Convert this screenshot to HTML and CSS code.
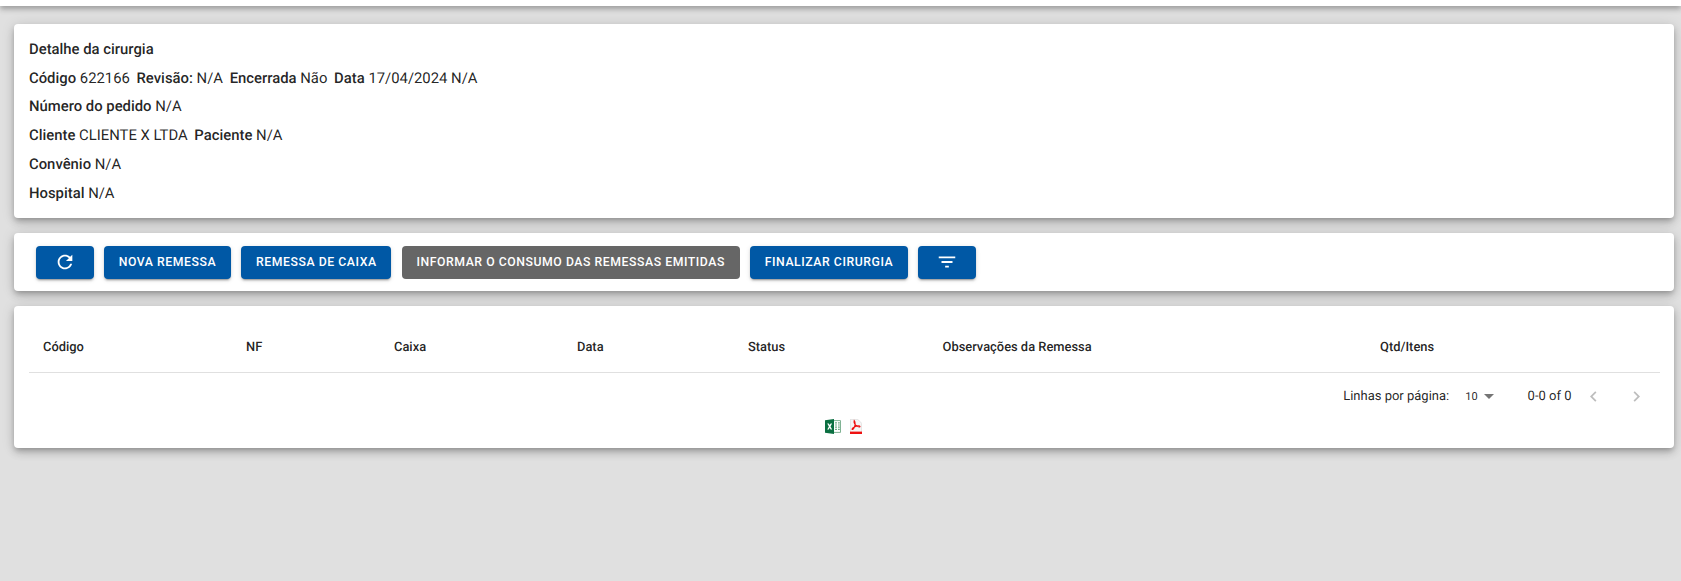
FILE: index.html
```html
<!DOCTYPE html>
<html lang="pt-BR">
<head>
<meta charset="utf-8">
<title>Detalhe da cirurgia</title>
<link rel="stylesheet" href="styles.css">
</head>
<body>
<header class="topbar"></header>
<main class="content">
  <section class="card details">
    <p class="line"><b>Detalhe da cirurgia</b></p>
    <p class="line"><b>Código</b> 622166 <b class="next">Revisão:</b> N/A <b class="next">Encerrada</b> Não <b class="next">Data</b> 17/04/2024 N/A</p>
    <p class="line"><b>Número do pedido</b> N/A</p>
    <p class="line"><b>Cliente</b> CLIENTE X LTDA <b class="next">Paciente</b> N/A</p>
    <p class="line"><b>Convênio</b> N/A</p>
    <p class="line"><b>Hospital</b> N/A</p>
  </section>
  <section class="card toolbar">
    <button class="btn btn-icon" type="button" aria-label="Atualizar">
      <svg class="icon" viewBox="0 0 24 24"><path fill="#fff" d="M17.65 6.35C16.2 4.9 14.21 4 12 4c-4.42 0-7.99 3.58-7.99 8s3.57 8 7.99 8c3.73 0 6.84-2.55 7.73-6h-2.08c-.82 2.33-3.04 4-5.65 4-3.31 0-6-2.69-6-6s2.69-6 6-6c1.66 0 3.14.69 4.22 1.78L13 11h7V4l-2.35 2.35z"/></svg>
    </button>
    <button class="btn" type="button">Nova Remessa</button>
    <button class="btn" type="button">Remessa de Caixa</button>
    <button class="btn btn-grey" type="button">Informar o consumo das remessas emitidas</button>
    <button class="btn" type="button">Finalizar Cirurgia</button>
    <button class="btn btn-icon" type="button" aria-label="Filtrar">
      <svg class="icon" viewBox="0 0 24 24"><path fill="#fff" d="M10 18h4v-2h-4v2zM3 6v2h18V6H3zm3 7h12v-2H6v2z"/></svg>
    </button>
  </section>
  <section class="card listing">
    <table class="table">
      <thead>
        <tr>
          <th class="c1">Código</th>
          <th class="c2">NF</th>
          <th class="c3">Caixa</th>
          <th class="c4">Data</th>
          <th class="c5">Status</th>
          <th class="c6">Observações da Remessa</th>
          <th class="c7">Qtd/Itens</th>
        </tr>
      </thead>
    </table>
    <div class="pager">
      <span class="pager-label">Linhas por página:</span>
      <span class="pager-select">10<svg class="caret" viewBox="0 0 10 5"><path fill="#757575" d="M0 0h10L5 5z"/></svg></span>
      <span class="pager-range">0-0 of 0</span>
      <svg class="chev" viewBox="0 0 24 24"><path fill="#bdbdbd" d="M15.41 7.41 14 6l-6 6 6 6 1.41-1.41L10.83 12z"/></svg>
      <svg class="chev chev-next" viewBox="0 0 24 24"><path fill="#bdbdbd" d="M10 6 8.59 7.41 13.17 12l-4.58 4.59L10 18l6-6z"/></svg>
    </div>
    <div class="exports">
      <svg class="file-xls" viewBox="0 0 16 15">
        <path fill="#fff" stroke="#5f9f78" stroke-width=".8" d="M8 1.6h7.5v11.8H8z"/>
        <path fill="#6fa985" d="M10 3.2h2v1.2h-2zM13 3.2h1.8v1.2H13zM10 5.4h2v1.2h-2zM13 5.4h1.8v1.2H13zM10 7.6h2v1.2h-2zM13 7.6h1.8v1.2H13zM10 9.8h2V11h-2zM13 9.8h1.8V11H13z"/>
        <path fill="#0b6f41" d="M0 1.2 9 0v15l-9-1.2z"/>
        <path fill="#fff" d="M2.2 4.4h1.6l.9 1.7.9-1.7h1.5L5.5 7.5l1.7 3H5.6l-.9-1.8-.9 1.8H2.2l1.7-3z"/>
      </svg>
      <svg class="file-pdf" viewBox="0 0 12 15">
        <path fill="#f5f5f5" stroke="#d4d4d4" stroke-width=".6" d="M.3.3h7.4l4 4v10.4H.3z"/>
        <path fill="#ee1111" d="M0 12.6h12V15H0z"/>
        <path fill="none" stroke="#ee1111" stroke-width="1.1" d="M4.2 1.6c-.6 2 .8 4.2 3.2 5.8 1.4.9 2.8.8 2.6.1-.2-.6-2.2-.7-4.4 0-1.8.6-3.5 2-3.5 2.8 0 .7 1.5-.1 2.3-2.3.7-2 1-4.9-.2-6.4z"/>
      </svg>
    </div>
  </section>
</main>
</body>
</html>
```
FILE: styles.css
```css
* {
  box-sizing: border-box;
}

html,
body {
  height: 100%;
}

body {
  margin: 0;
  background: #e0e0e0;
  color: rgba(0, 0, 0, 0.87);
  font-family: Roboto, "Liberation Sans", sans-serif;
  text-rendering: geometricPrecision;
  overflow: hidden;
}

.topbar {
  height: 6px;
  background: #fff;
  box-shadow: 0 2px 4px -1px rgba(0, 0, 0, 0.2), 0 4px 5px 0 rgba(0, 0, 0, 0.14), 0 1px 10px 0 rgba(0, 0, 0, 0.12);
}

.content {
  display: flex;
  flex-direction: column;
  gap: 15px;
  padding: 18px 7px 0 14px;
}

.card {
  background: #fff;
  border-radius: 4px;
  box-shadow: 0 3px 5px -1px rgba(0, 0, 0, 0.2), 0 5px 8px 0 rgba(0, 0, 0, 0.14), 0 1px 14px 0 rgba(0, 0, 0, 0.12);
}

.details {
  height: 194px;
  padding: 10.8px 15px 0;
}

.line {
  margin: 0;
  height: 28.75px;
  font-size: 14.85px;
  line-height: 28.75px;
  white-space: pre-wrap;
}

.line b {
  font-weight: 500;
}

.next {
  margin-left: 3px;
}

.toolbar {
  display: flex;
  align-items: center;
  gap: 10.5px;
  height: 58px;
  padding: 0 22px;
}

.btn {
  display: flex;
  align-items: center;
  justify-content: center;
  height: 33px;
  padding: 0 14.7px;
  border: 0;
  border-radius: 4px;
  background: #0058a5;
  color: #fff;
  font-family: inherit;
  font-size: 12.25px;
  font-weight: 500;
  letter-spacing: 0.55px;
  text-transform: uppercase;
  white-space: nowrap;
  box-shadow: 0 3px 1px -2px rgba(0, 0, 0, 0.2), 0 2px 2px 0 rgba(0, 0, 0, 0.14), 0 1px 5px 0 rgba(0, 0, 0, 0.12);
}

.btn-icon {
  width: 57.5px;
  padding: 0;
}

.btn-grey {
  background: #666;
  box-shadow: none;
}

.icon {
  width: 22px;
  height: 22px;
}

.listing {
  height: 142px;
  padding: 0 14px 0 15px;
}

.table {
  width: 100%;
  border-collapse: collapse;
  table-layout: fixed;
}

.table th {
  height: 66px;
  padding: 18px 14px 0;
  border-bottom: 1px solid #e0e0e0;
  font-size: 12.9px;
  font-weight: 500;
  text-align: left;
}

.c1 { width: 203px; }
.c2 { width: 148px; }
.c3 { width: 183px; }
.c4 { width: 171px; }
.c5 { width: 194.5px; }
.c6 { width: 437.5px; }

.pager {
  display: flex;
  align-items: center;
  justify-content: flex-end;
  height: 23px;
  margin-top: 12px;
  padding-right: 13.5px;
  font-size: 13px;
}

.pager-select {
  display: flex;
  align-items: center;
  gap: 6px;
  margin-left: 16px;
  font-size: 11px;
}

.caret {
  width: 10px;
  height: 5px;
}

.pager-range {
  margin-left: 34px;
}

.chev {
  width: 21px;
  height: 21px;
  margin-left: 11px;
}

.chev-next {
  margin-left: 22px;
}

.exports {
  display: flex;
  justify-content: center;
  align-items: center;
  gap: 9px;
  margin-top: 11px;
  padding-right: 3px;
}

.file-xls {
  width: 16px;
  height: 15px;
}

.file-pdf {
  width: 12px;
  height: 15px;
}
```
